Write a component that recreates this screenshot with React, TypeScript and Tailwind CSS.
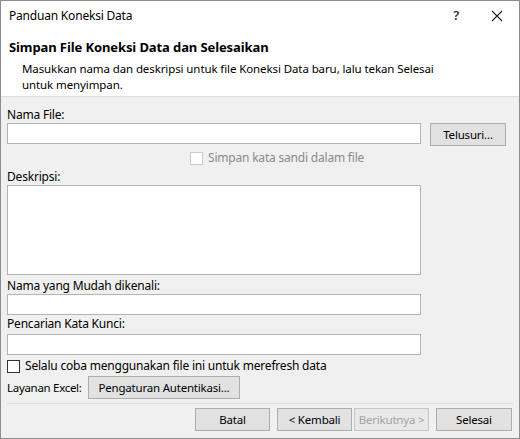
import React from "react";

const font = { fontFamily: '"Segoe UI", "Noto Sans", sans-serif' };

function Btn({
  children,
  disabled,
  className = "",
}: {
  children: React.ReactNode;
  disabled?: boolean;
  className?: string;
}) {
  return (
    <button
      className={
        "h-[23px] shrink-0 border text-[11.5px] leading-none flex items-center justify-center whitespace-nowrap tracking-[-0.2px] " +
        (disabled ? "text-[#a3a3a3] border-[#c6c6c6] bg-[#e8e8e8] " : "text-black border-[#adadad] bg-[#e1e1e1] ") +
        className
      }
    >
      {children}
    </button>
  );
}

export default function App() {
  return (
    <div
      className="w-[520px] h-[439px] border border-[#8c8c8c] bg-[#f0f0f0] flex flex-col text-black overflow-hidden tracking-[-0.2px]"
      style={font}
    >
      {/* Title bar */}
      <div className="h-[29px] shrink-0 bg-white flex items-center pl-[8px] pr-[14px]">
        <span className="text-[12px] flex-1">Panduan Koneksi Data</span>
        <span className="text-[13px] font-semibold text-[#333] mr-[32px]">?</span>
        <svg width="12" height="12" viewBox="0 0 12 12" className="mr-[2px]">
          <path d="M1 1L11 11M11 1L1 11" stroke="#222" strokeWidth="1.1" fill="none" />
        </svg>
      </div>

      {/* Header */}
      <div className="h-[67px] shrink-0 bg-white border-b border-[#dcdcdc] pl-[8px] pt-[8px]">
        <div className="text-[13px] font-bold leading-[18px] tracking-[-0.1px]">
          Simpan File Koneksi Data dan Selesaikan
        </div>
        <div className="text-[11.5px] leading-[16px] tracking-[-0.1px] pl-[13px] mt-[5px] whitespace-nowrap">
          Masukkan nama dan deskripsi untuk file Koneksi Data baru, lalu tekan Selesai
          <br />
          untuk menyimpan.
        </div>
      </div>

      {/* Body */}
      <div className="flex flex-col px-[6px] flex-1">
        <div className="text-[12px] leading-[16px] mt-[10px]">Nama File:</div>
        <div className="flex items-start">
          <div className="w-[414px] h-[21px] bg-white border border-[#b4b4b4]" />
          <Btn className="w-[76px] ml-[9px]">Telusuri...</Btn>
        </div>
        <div className="flex items-center ml-[183px] mt-[5px] h-[14px]">
          <div className="w-[13px] h-[13px] border border-[#cccccc] bg-white" />
          <span className="text-[12px] text-[#8a8a8a] ml-[5px]">Simpan kata sandi dalam file</span>
        </div>
        <div className="text-[12px] leading-[16px] mt-[4px]">Deskripsi:</div>
        <div className="w-[414px] h-[90px] shrink-0 bg-white border border-[#b4b4b4]" />
        <div className="text-[12px] leading-[16px] mt-[3px]">Nama yang Mudah dikenali:</div>
        <div className="w-[414px] h-[21px] shrink-0 bg-white border border-[#b4b4b4]" />
        <div className="text-[12px] leading-[16px] mt-[1px]">Pencarian Kata Kunci:</div>
        <div className="w-[414px] h-[21px] shrink-0 bg-white border border-[#b4b4b4] mt-[2px]" />
        <div className="flex items-center mt-[4px] h-[14px]">
          <div className="w-[13px] h-[13px] border border-[#333] bg-white" />
          <span className="text-[12px] ml-[5px]">Selalu coba menggunakan file ini untuk merefresh data</span>
        </div>
        <div className="flex items-center mt-[3px]">
          <span className="text-[11.5px] tracking-[-0.3px] w-[81px] whitespace-nowrap">Layanan Excel:</span>
          <Btn className="w-[152px]">Pengaturan Autentikasi...</Btn>
        </div>
        <div className="border-t border-[#dcdcdc] mt-[4px]" />
        <div className="flex justify-end mt-[4px] pr-[1px]">
          <Btn className="w-[75px]">Batal</Btn>
          <Btn className="w-[75px] ml-[7px]">&lt; Kembali</Btn>
          <Btn disabled className="w-[75px] ml-[2px]">Berikutnya &gt;</Btn>
          <Btn className="w-[76px] ml-[7px]">Selesai</Btn>
        </div>
      </div>
    </div>
  );
}
